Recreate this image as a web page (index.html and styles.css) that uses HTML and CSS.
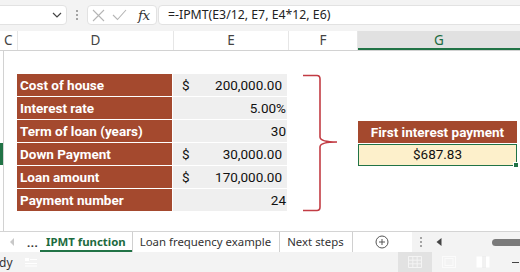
FILE: index.html
```html
<!DOCTYPE html>
<html>
<head>
<meta charset="utf-8">
<link rel="stylesheet" href="styles.css">
</head>
<body>
<div class="app">
  <div class="formula-bar">
    <div class="namebox">
      <svg class="chev" width="10" height="6" viewBox="0 0 10 6"><path d="M1 1 L5 5 L9 1" fill="none" stroke="#444" stroke-width="1.2"/></svg>
    </div>
    <div class="vdots"><span></span><span></span><span></span></div>
    <div class="fxbox">
      <svg width="13" height="13" viewBox="0 0 13 13"><path d="M1 1 L12 12 M12 1 L1 12" stroke="#b5b5b5" stroke-width="1.1" fill="none"/></svg>
      <svg width="15" height="12" viewBox="0 0 15 12"><path d="M1 6 L5.5 10.5 L14 1" stroke="#b5b5b5" stroke-width="1.1" fill="none"/></svg>
      <span class="fx">fx</span>
    </div>
    <div class="formula">=-IPMT(E3/12, E7, E4*12, E6)</div>
  </div>

  <div class="col-headers">
    <div class="ch col-c">C</div>
    <div class="ch col-d">D</div>
    <div class="ch col-e">E</div>
    <div class="ch col-f">F</div>
    <div class="ch col-g">G</div>
  </div>

  <div class="sheet">
    <div class="rowhdr"><div class="rowsel"></div></div>
    <div class="canvas">
      <div class="inputs">
        <div class="lbl">Cost of house</div>
        <div class="val acct"><span>$</span><span>200,000.00</span></div>
        <div class="lbl">Interest rate</div>
        <div class="val"><span></span><span>5.00%</span></div>
        <div class="lbl">Term of loan (years)</div>
        <div class="val"><span></span><span>30</span></div>
        <div class="lbl">Down Payment</div>
        <div class="val acct"><span>$</span><span>30,000.00</span></div>
        <div class="lbl">Loan amount</div>
        <div class="val acct"><span>$</span><span>170,000.00</span></div>
        <div class="lbl">Payment number</div>
        <div class="val"><span></span><span>24</span></div>
      </div>
      <svg class="brace" width="40" height="140" viewBox="0 0 40 140">
        <path d="M3 2.5 H17 Q20 2.5 20 6 V64 Q20 69 37 69 Q20 69 20 74 V134 Q20 137.5 17 137.5 H3" fill="none" stroke="#c23c44" stroke-width="1.6"/>
      </svg>
      <div class="result">
        <div class="res-h">First interest payment</div>
        <div class="res-v">$687.83</div>
      </div>
    </div>
  </div>

  <div class="tabs">
    <svg class="tri-l" width="6" height="8" viewBox="0 0 6 8"><path d="M5 0 L1 4 L5 8 Z" fill="#c8c8c8"/></svg>
    <span class="more">...</span>
    <div class="tab active">IPMT function</div>
    <div class="tab">Loan frequency example</div>
    <div class="tab">Next steps</div>
    <svg class="plus" width="14" height="14" viewBox="0 0 14 14"><circle cx="7" cy="7" r="6" fill="none" stroke="#555" stroke-width="1"/><path d="M7 4 V10 M4 7 H10" stroke="#555" stroke-width="1"/></svg>
    <div class="hscroll">
      <div class="vdots small"><span></span><span></span><span></span></div>
      <svg width="6" height="8" viewBox="0 0 6 8"><path d="M5.5 0 L0.5 4 L5.5 8 Z" fill="#444"/></svg>
      <div class="thumb"></div>
    </div>
  </div>

  <div class="status">
    <span class="ready">dy</span>
    <svg class="acc" width="12" height="10" viewBox="0 0 12 10"><rect x="0" y="1" width="4" height="3" fill="#fff"/><rect x="5" y="2" width="7" height="1" fill="#fff"/><rect x="0" y="6" width="12" height="1" fill="#fff"/><rect x="0" y="8.5" width="12" height="1" fill="#fff"/></svg>
    <div class="views">
      <div class="view on">
        <svg width="14" height="12" viewBox="0 0 14 12"><path d="M0.5 0.5 H13.5 V11.5 H0.5 Z M0.5 4.2 H13.5 M0.5 7.8 H13.5 M4.8 0.5 V11.5 M9.2 0.5 V11.5" fill="none" stroke="#f4f4f4" stroke-width="1"/></svg>
      </div>
      <div class="view">
        <svg width="14" height="12" viewBox="0 0 14 12"><rect x="0.5" y="0.5" width="13" height="11" fill="none" stroke="#fbfbfb"/><rect x="3" y="2.5" width="8" height="7" fill="none" stroke="#fbfbfb"/></svg>
      </div>
      <div class="view">
        <svg width="14" height="12" viewBox="0 0 14 12"><rect x="0.5" y="0.5" width="13" height="11" fill="#fff"/><path d="M7 0 V12 M9 0 V12" stroke="#e4e4e4"/></svg>
      </div>
      <div class="minus"></div>
    </div>
  </div>
</div>
</body>
</html>
```

FILE: styles.css
```css
* { box-sizing: border-box; }
html, body { margin: 0; padding: 0; }
body { width: 520px; height: 272px; overflow: hidden; background: #fff; font-family: "Noto Sans", "Open Sans", sans-serif; }
.app { width: 520px; height: 272px; display: flex; flex-direction: column; overflow: hidden; }

/* formula bar */
.formula-bar { height: 31px; flex: none; background: #f3f3f3; display: flex; align-items: flex-start; padding-top: 5px; }
.namebox { width: 73px; margin-left: -6px; height: 20px; background: #fff; border: 1px solid #e2e2e2; border-radius: 4px; display: flex; align-items: center; justify-content: flex-end; padding-right: 4px; }
.vdots { width: 20px; height: 20px; display: flex; flex-direction: column; align-items: center; justify-content: center; gap: 2px; }
.vdots span { width: 2px; height: 2px; background: #8a8a8a; border-radius: 1px; }
.fxbox { width: 70px; height: 20px; background: #fff; border: 1px solid #e2e2e2; border-radius: 4px; display: flex; align-items: center; gap: 7px; padding-left: 4px; }
.fx { font-family: "DejaVu Serif", "Liberation Serif", serif; font-style: italic; font-size: 13.5px; color: #333; margin-left: 4px; letter-spacing: -0.5px; }
.formula { flex: 1; margin-left: 1px; margin-right: -6px; height: 20px; background: #fff; border: 1px solid #e2e2e2; border-radius: 4px; font-size: 12.3px; color: #222; line-height: 18px; padding-left: 9px; }

/* column headers */
.col-headers { height: 20px; flex: none; display: flex; border-bottom: 1px solid #d2d2d2; background: #fff; }
.ch { font-size: 13.5px; color: #444; text-align: center; line-height: 19px; border-left: 1px solid #e6e6e6; }
.col-c { width: 17px; border-left: none; text-align: left; padding-left: 4px; }
.col-d { width: 156px; }
.col-e { width: 115px; }
.col-f { width: 69px; }
.col-g { flex: 1; background: #e1e1e1; color: #1d6b40; box-shadow: inset 0 -2px 0 #217346; }

/* sheet */
.sheet { height: 180px; flex: none; display: flex; }
.rowhdr { width: 4px; border-right: 1px solid #d2d2d2; }
.rowsel { width: 3px; height: 22px; margin-top: 92px; background: #217346; }
.canvas { flex: 1; display: flex; align-items: flex-start; padding-left: 13px; padding-top: 23px; }
.inputs { display: grid; grid-template-columns: 155px 114px; column-gap: 1px; row-gap: 1px; width: 270px; font-family: "Roboto", "Liberation Sans", sans-serif; font-size: 13.5px; }
.lbl { height: 22px; background: #a4492e; color: #fff; font-weight: bold; padding-left: 3px; line-height: 22px; white-space: nowrap; }
.val { height: 22px; background: #efefef; color: #111; display: flex; justify-content: space-between; line-height: 22px; padding: 0 1px 0 9px; }
.val.acct { padding-right: 5px; }
.brace { flex: none; margin-left: 13px; margin-top: -1px; }
.result { width: 159px; margin-left: 18px; font-family: "Roboto", "Liberation Sans", sans-serif; font-size: 13.5px; margin-top: 47px; }
.res-h { height: 22px; background: #a4492e; color: #fff; font-weight: bold; text-align: center; line-height: 22px; margin-bottom: 1px; }
.res-v { height: 22px; background: #fdf0cb; border: 1.5px solid #217346; color: #111; text-align: center; line-height: 19px; position: relative; }
.res-v::after { content: ""; position: absolute; right: -3px; bottom: -3px; width: 4px; height: 4px; background: #217346; border: 1px solid #fff; }

/* tabs */
.tabs { height: 21px; flex: none; border-top: 1px solid #d4d4d4; background: #fff; display: flex; align-items: center; font-size: 11.4px; color: #333; }
.tri-l { margin-left: 9px; }
.more { margin-left: 12px; color: #333; font-weight: bold; letter-spacing: 0.5px; width: 13px; }
.tab { height: 20px; line-height: 19px; padding: 0 8px 0 7px; border-right: 1px solid #d0d0d0; white-space: nowrap; }
.tab.active { color: #1d6b40; font-weight: bold; box-shadow: inset 0 -2px 0 #217346; padding: 0 6px 0 6px; }
.plus { margin-left: 22px; }
.hscroll { margin-left: 23px; flex: 1; height: 20px; background: #f3f3f3; display: flex; align-items: center; padding-left: 8px; gap: 14px; }
.hscroll .vdots { width: 2px; }
.thumb { margin-left: 36px; flex: 1; height: 7px; border-radius: 4px; background: #7a7a7a; margin-right: -4px; }

/* status */
.status { flex: 1; background: #f3f3f3; display: flex; align-items: center; font-size: 12px; color: #333; }
.ready { margin-left: -1px; }
.acc { margin-left: 12px; }
.views { margin-left: auto; display: flex; align-items: center; height: 100%; }
.view { width: 34px; height: 100%; display: flex; align-items: center; justify-content: center; }
.view.on { background: #e2e2e2; }
.minus { width: 7px; height: 1px; background: #444; margin-left: 12px; margin-right: 1px; }
```
